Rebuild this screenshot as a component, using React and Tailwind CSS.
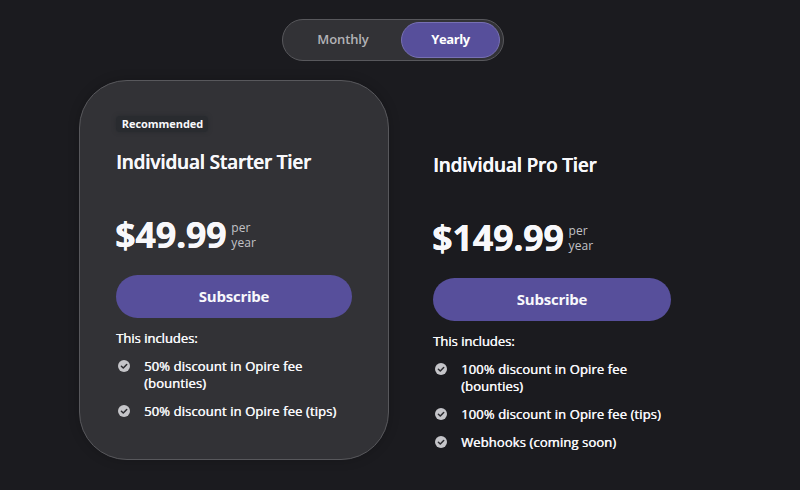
import React from "react";

function CheckBadge() {
  return (
    <svg viewBox="0 0 12 12" className="mt-[2px] h-3 w-3 shrink-0">
      <circle cx="6" cy="6" r="6" fill="#c5c5c9" />
      <path d="M3.4 6.2 5.3 8 8.7 4.5" fill="none" stroke="#2b2b2f" strokeWidth="1.5" strokeLinecap="round" strokeLinejoin="round" />
    </svg>
  );
}

function Feature({ children }) {
  return (
    <li className="flex gap-[14px] pl-[2px]">
      <CheckBadge />
      <span className="text-[13px] leading-[17px] tracking-[0.12px] whitespace-nowrap [text-shadow:0.4px_0_0_currentColor]">{children}</span>
    </li>
  );
}

function Plan({ name, price, features }) {
  return (
    <>
      <h2 className="h-6 text-[19px] leading-6 font-semibold tracking-[-0.2px] whitespace-nowrap [text-shadow:0.4px_0_0_currentColor]">{name}</h2>
      <div className="mt-[41px] flex h-[40px] items-center gap-[5px]">
        <span className="-ml-px font-['Noto_Sans',sans-serif] text-[36px] leading-[40px] font-bold tracking-[-0.3px] whitespace-nowrap [text-shadow:0.3px_0_0_currentColor]">{price}</span>
        <span className="text-[12px] leading-[15px] tracking-[0.1px] text-[#c2c2c7]">
          per
          <br />
          year
        </span>
      </div>
      <button className="mt-5 h-[43px] w-full rounded-full bg-[#574f9b] text-[15px] font-bold tracking-[-0.25px]">Subscribe</button>
      <p className="mt-3 text-[13px] leading-[17px] whitespace-nowrap [text-shadow:0.4px_0_0_currentColor]">This includes:</p>
      <ul className="mt-[11px] flex flex-col gap-[11px]">
        {features.map((f, i) => (
          <Feature key={i}>{f}</Feature>
        ))}
      </ul>
    </>
  );
}

export default function App() {
  return (
    <main className="h-[490px] w-[800px] overflow-hidden bg-[#1b1b1f] pt-[19px] font-['Open_Sans','Noto_Sans',sans-serif] text-[#f8f8fb]">
      <div className="ml-[282px] flex h-[42px] w-[222px] rounded-full border border-[#58585c] bg-[#323236] p-[2px] pr-[3px] text-[13px] font-semibold">
        <button className="w-[116px] tracking-[-0.1px] text-[#b2b2b7]">Monthly</button>
        <button className="flex-1 rounded-full border border-[#7770b3] bg-[#574f9b] font-bold tracking-[-0.4px] text-white">Yearly</button>
      </div>
      <div className="mt-[19px] flex pl-[79px]">
        <section className="h-[380px] w-[310px] rounded-[48px] border border-[#58585c] bg-[#323236] px-9 pt-[35px] shadow-[0_0_12px_rgba(0,0,0,0.2)]">
          <div className="mb-[18px] flex h-4">
            <span className="flex h-4 w-[92px] items-center justify-center rounded bg-[#292b2f] pl-px text-[11px] font-bold tracking-[-0.05px] shadow-[0_0_4px_#292b2f]">Recommended</span>
          </div>
          <Plan
            name="Individual Starter Tier"
            price="$49.99"
            features={[<>50% discount in Opire fee<br />(bounties)</>, "50% discount in Opire fee (tips)"]}
          />
        </section>
        <section className="ml-11 w-[238px] pt-[73px]">
          <Plan
            name="Individual Pro Tier"
            price="$149.99"
            features={[<>100% discount in Opire fee<br />(bounties)</>, "100% discount in Opire fee (tips)", "Webhooks (coming soon)"]}
          />
        </section>
      </div>
    </main>
  );
}
